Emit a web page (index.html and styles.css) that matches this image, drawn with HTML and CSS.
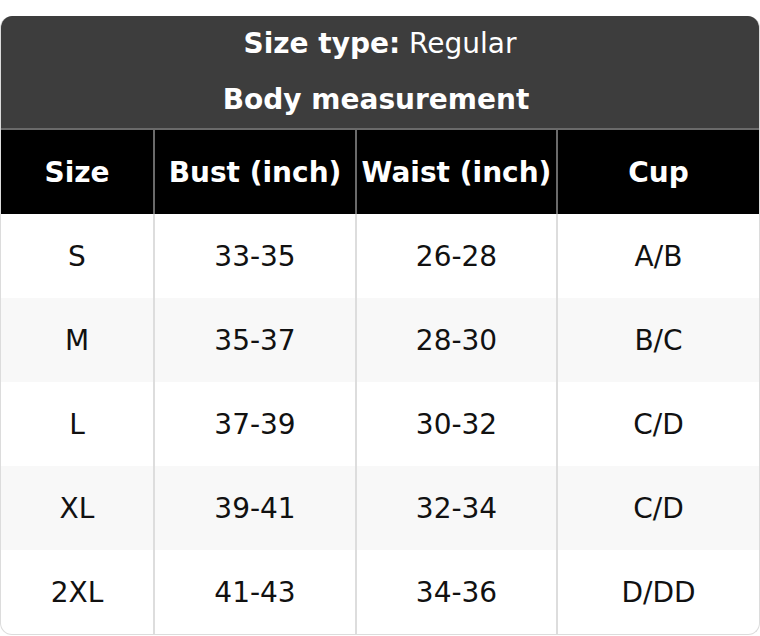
FILE: index.html
```html
<!DOCTYPE html>
<html>
<head>
<meta charset="utf-8">
<link rel="stylesheet" href="styles.css">
</head>
<body>
<div class="page">
  <div class="card">
    <div class="title">
      <div class="title-line"><b>Size type:</b> Regular</div>
      <div class="title-line title-sub"><b>Body measurement</b></div>
    </div>
    <table class="sizes">
      <colgroup>
        <col class="c1"><col class="c2"><col class="c3"><col class="c4">
      </colgroup>
      <thead>
        <tr><th>Size</th><th>Bust (inch)</th><th>Waist (inch)</th><th>Cup</th></tr>
      </thead>
      <tbody>
        <tr><td>S</td><td>33-35</td><td>26-28</td><td>A/B</td></tr>
        <tr><td>M</td><td>35-37</td><td>28-30</td><td>B/C</td></tr>
        <tr><td>L</td><td>37-39</td><td>30-32</td><td>C/D</td></tr>
        <tr><td>XL</td><td>39-41</td><td>32-34</td><td>C/D</td></tr>
        <tr><td>2XL</td><td>41-43</td><td>34-36</td><td>D/DD</td></tr>
      </tbody>
    </table>
  </div>
</div>
</body>
</html>
```

FILE: styles.css
```css
html, body {
  margin: 0;
  padding: 0;
  background: #ffffff;
}
.page {
  padding-top: 16px;
  font-family: "DejaVu Sans", sans-serif;
}
.card {
  width: 760px;
  border: 1px solid #dcdcdc;
  border-top: none;
  border-radius: 12px;
  overflow: hidden;
  box-sizing: border-box;
}
.title {
  background: #3d3d3d;
  color: #ffffff;
  text-align: center;
}
.title-line {
  height: 56px;
  line-height: 56px;
  font-size: 28px;
}
.title-sub {
  padding-right: 8px;
}
.title-line b {
  font-weight: bold;
}
.sizes {
  width: 100%;
  border-collapse: collapse;
  table-layout: fixed;
}
.c1 { width: 153px; }
.c2 { width: 202px; }
.c3 { width: 201px; }
.c4 { width: auto; }
.sizes th {
  background: #000000;
  color: #ffffff;
  font-weight: bold;
  font-size: 28px;
  height: 84px;
  padding: 0;
  border-top: 2px solid #6a6a6a;
  border-left: 2px solid #6a6a6a;
  text-align: center;
}
.sizes th:first-child { border-left: none; }
.sizes td {
  height: 84px;
  padding: 0;
  text-align: center;
  font-size: 28px;
  color: #111111;
  border-left: 2px solid #dddddd;
}
.sizes td:first-child { border-left: none; }
.sizes tbody tr:nth-child(even) td { background: #f8f8f8; }
```
